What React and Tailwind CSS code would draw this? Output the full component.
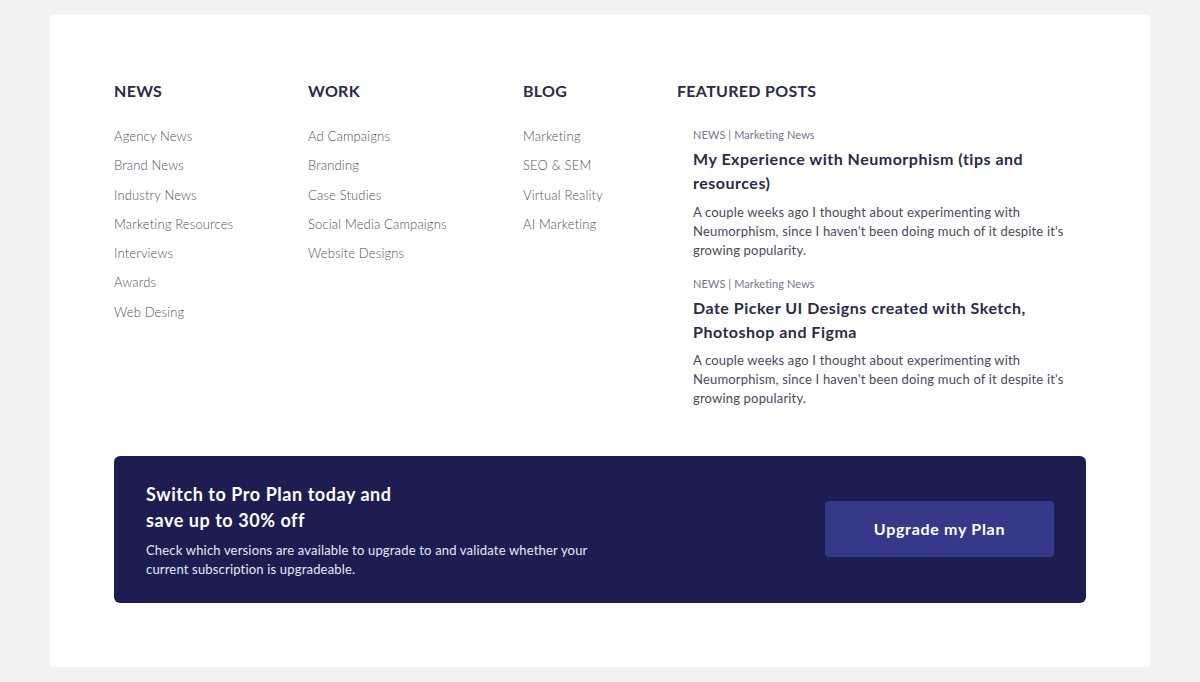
const columns = [
  {
    title: "NEWS",
    width: "w-[194px]",
    links: ["Agency News", "Brand News", "Industry News", "Marketing Resources", "Interviews", "Awards", "Web Desing"],
  },
  {
    title: "WORK",
    width: "w-[215px]",
    links: ["Ad Campaigns", "Branding", "Case Studies", "Social Media Campaigns", "Website Designs"],
  },
  {
    title: "BLOG",
    width: "w-[154px]",
    links: ["Marketing", "SEO & SEM", "Virtual Reality", "AI Marketing"],
  },
];

const posts = [
  {
    title: "My Experience with Neumorphism (tips and resources)",
    excerpt:
      "A couple weeks ago I thought about experimenting with Neumorphism, since I haven't been doing much of it despite it's growing popularity.",
  },
  {
    title: "Date Picker UI Designs created with Sketch, Photoshop and Figma",
    excerpt:
      "A couple weeks ago I thought about experimenting with Neumorphism, since I haven't been doing much of it despite it's growing popularity.",
  },
];

export default function App() {
  return (
    <div className="min-h-[682px] bg-[#f2f2f2] px-[50px] pt-[15px] pb-[15px] font-['Lato',sans-serif]">
      <div className="rounded-[4px] bg-white px-16 pt-16 pb-16">
        <div className="flex">
          {columns.map((col) => (
            <div key={col.title} className={`${col.width} shrink-0`}>
              <h3 className="text-[16px] leading-[24px] font-bold tracking-[0.3px] text-[#2b2b45]">{col.title}</h3>
              <ul className="mt-[19px]">
                {col.links.map((link) => (
                  <li key={link} className="text-[13px] leading-[29.3px] font-light tracking-[0.15px] text-[#50505f]">
                    {link}
                  </li>
                ))}
              </ul>
            </div>
          ))}

          <div className="flex-1">
            <h3 className="text-[16px] leading-[24px] font-bold tracking-[0.3px] text-[#2b2b45]">FEATURED POSTS</h3>
            <div className="mt-[24px] flex flex-col gap-[16px] pl-4">
              {posts.map((post) => (
                <div key={post.title}>
                  <p className="text-[11px] leading-[16px] tracking-[0.1px] text-[#76768a]">NEWS | Marketing News</p>
                  <h4 className="mt-[4px] pr-[40px] text-[16px] leading-[24px] font-bold tracking-[0.5px] text-[#2b2b45]">
                    {post.title}
                  </h4>
                  <p className="mt-[7.5px] pr-[10px] text-[13px] leading-[19px] tracking-[0.18px] text-[#4a4a5c]">
                    {post.excerpt}
                  </p>
                </div>
              ))}
            </div>
          </div>
        </div>

        <div className="mt-[48px] flex items-center justify-between rounded-[6px] bg-[#1d1d52] px-8 pt-[25px] pb-[24px]">
          <div className="w-[470px]">
            <h2 className="w-[270px] text-[18px] leading-[26px] font-bold tracking-[0.55px] text-white">
              Switch to Pro Plan today and save up to 30% off
            </h2>
            <p className="mt-[8px] text-[13px] leading-[19px] tracking-[0.18px] text-[#e8e8f2]">
              Check which versions are available to upgrade to and validate whether your current subscription is upgradeable.
            </p>
          </div>
          <button className="mb-[2px] h-[56px] w-[229px] rounded-[4px] bg-[#363889] text-[16px] font-bold tracking-[0.7px] text-white">
            Upgrade my Plan
          </button>
        </div>
      </div>
    </div>
  );
}
